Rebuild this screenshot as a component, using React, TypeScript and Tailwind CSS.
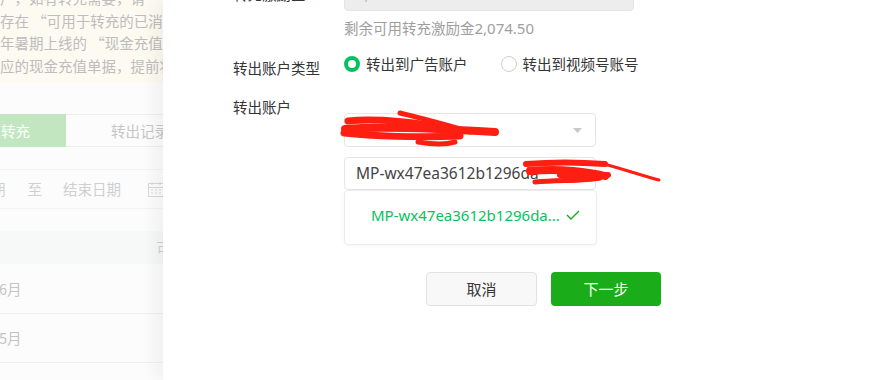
import React from "react";

const FONT = { fontFamily: '"Noto Sans", "Noto Sans CJK SC", sans-serif' };
const CJK = { fontFamily: '"Noto Sans CJK SC", "Noto Sans", sans-serif' };

function Radio({ checked, label }: { checked: boolean; label: string }) {
  return (
    <div className="flex items-center gap-[6px] h-[20px]">
      {checked ? (
        <span className="w-[16px] h-[16px] rounded-full border-[4.5px] border-[#07c160] bg-white box-border" />
      ) : (
        <span className="w-[16px] h-[16px] rounded-full border border-[#cfcfcf] bg-white box-border" />
      )}
      <span className="text-[14.5px] leading-[20px] text-[#353535]">{label}</span>
    </div>
  );
}

export default function App() {
  return (
    <div className="relative w-[896px] h-[380px] overflow-hidden flex bg-white" style={FONT}>
      {/* background page (dimmed) */}
      <div className="w-[163px] shrink-0 overflow-hidden bg-[#fcfcfc] flex flex-col" style={CJK}>
        <div className="h-[83px] bg-[#fcfaf1] overflow-hidden">
          <div className="mt-[-13px] text-[14.5px] leading-[22.5px] text-[#bdbdbd] whitespace-nowrap">
            <div>户，如有转充需要，请</div>
            <div>存在 “可用于转充的已消耗</div>
            <div>年暑期上线的 “现金充值”</div>
            <div>应的现金充值单据，提前将</div>
          </div>
        </div>
        <div className="mt-[31px] flex h-[33px] text-[14.5px]">
          <div className="w-[66px] shrink-0 bg-[#c2e7c0] text-white flex items-center pl-[1px]">转充</div>
          <div className="w-[97px] shrink-0 border-y border-[#eeeeee] flex items-center pl-[45px] text-[#c6c6c6] whitespace-nowrap overflow-hidden">转出记录</div>
        </div>
        <div className="mt-[22px] h-[40px] border-y border-[#f3f3f3] flex items-center text-[14.5px] text-[#cfcfcf] whitespace-nowrap">
          <span className="ml-[-9px]">期</span>
          <span className="ml-[22px]">至</span>
          <span className="ml-[21px]">结束日期</span>
          <svg className="ml-[27px] shrink-0" width="16" height="16" viewBox="0 0 16 16" fill="none" stroke="#d9d9d9" strokeWidth="1">
            <rect x="0.5" y="2.5" width="15" height="13" />
            <path d="M0.5 6.5h15M4 1v3M12 1v3M3 9h2M7 9h2M11 9h2M3 12h2M7 12h2M11 12h2" />
          </svg>
        </div>
        <div className="mt-[22px] h-[33px] bg-[#f7f8f8] flex items-center justify-end text-[14.5px] text-[#d0d0d0]">
          <span className="mr-[-8px]">可</span>
        </div>
        <div className="h-[50px] border-b border-[#f0f0f0] flex items-center text-[14.5px] text-[#c4c4c4]">
          <span className="ml-[-1px]">6月</span>
        </div>
        <div className="h-[49px] border-b border-[#f0f0f0] flex items-center text-[14.5px] text-[#c4c4c4]">
          <span className="ml-[-1px]">5月</span>
        </div>
      </div>

      {/* drawer */}
      <div className="relative flex-1 bg-white shadow-[-10px_0_14px_rgba(0,0,0,0.045)] text-[#353535]">
        <div className="pl-[70px] flex flex-col">
          {/* row 1 */}
          <div className="flex mt-[-22px] h-[33px]">
            <div className="w-[111px] flex items-center text-[14.5px]">转充激励金</div>
            <div className="w-[290px] h-[33px] rounded-[4px] bg-[#ededed] border border-[#e4e4e4] flex items-center pl-[11px] text-[15px] text-[#b8b8b8]">
              2,074.50
            </div>
          </div>
          <div className="ml-[111px] mt-[7px] text-[14.5px] leading-[20px] text-[#9e9e9e] whitespace-nowrap">
            剩余可用转充激励金<span className="text-[15px]">2,074.50</span>
          </div>
          {/* row radio */}
          <div className="flex mt-[16px]">
            <div className="w-[111px] mt-[4px] text-[14.5px] leading-[20px]">转出账户类型</div>
            <div className="flex gap-[33px]">
              <Radio checked label="转出到广告账户" />
              <Radio checked={false} label="转出到视频号账号" />
            </div>
          </div>
          {/* row account */}
          <div className="flex mt-[19px]">
            <div className="w-[111px] text-[14.5px] leading-[20px]">转出账户</div>
            <div className="flex flex-col">
              <div className="mt-[16px] w-[252px] h-[34px] rounded-[4px] border border-[#e6e6e6] flex items-center justify-end pr-[13px]">
                <svg width="9" height="5" viewBox="0 0 9 5">
                  <path d="M0 0h9L4.5 5z" fill="#c8c8c8" />
                </svg>
              </div>
              <div className="mt-[10px] w-[252px] h-[33px] rounded-[4px] border border-[#e6e6e6] flex items-center pl-[11px] text-[15.5px] text-[#444444] whitespace-nowrap overflow-hidden">
                MP-wx47ea3612b1296da
              </div>
              <div className="w-[253px] h-[55px] rounded-[4px] border border-[#ececec] bg-white shadow-[0_1px_4px_rgba(0,0,0,0.04)] pt-[8px]">
                <div className="h-[32px] flex items-center pl-[26px] pr-[16px] justify-between">
                  <span className="text-[15px] text-[#07c160] whitespace-nowrap">MP-wx47ea3612b1296da...</span>
                  <svg width="14" height="10" viewBox="0 0 14 10" fill="none" stroke="#1aad19" strokeWidth="1.4">
                    <path d="M1 5l4 4L13 1" />
                  </svg>
                </div>
              </div>
            </div>
          </div>
          {/* buttons */}
          <div className="flex ml-[193px] mt-[27px] gap-[14px]">
            <div className="w-[111px] h-[34px] rounded-[4px] border border-[#e2e2e2] bg-[#f8f8f8] flex items-center justify-center text-[15px] text-[#353535]">取消</div>
            <div className="w-[110px] h-[34px] rounded-[4px] bg-[#1aad19] flex items-center justify-center text-[15px] text-white">下一步</div>
          </div>
        </div>

        {/* red scribbles */}
        <svg className="absolute left-0 top-0 pointer-events-none" width="733" height="380" viewBox="163 0 733 380" fill="none" stroke="#ff1e12" strokeLinecap="round" strokeLinejoin="round">
          <path d="M345 129 C380 126, 430 128, 495 132" strokeWidth="8" />
          <path d="M348 121 C375 118, 420 122, 455 130" strokeWidth="7" />
          <path d="M400 113 C420 118, 445 124, 470 132" strokeWidth="5" />
          <path d="M344 133 C370 136, 420 138, 460 136" strokeWidth="7" />
          <path d="M418 142 C430 144, 445 145, 455 142" strokeWidth="5" />
          <path d="M526 164 C550 162, 580 162, 605 164" strokeWidth="6" />
          <path d="M530 171 C560 168, 590 172, 605 176" strokeWidth="8" />
          <path d="M535 182 C560 180, 585 181, 600 178" strokeWidth="5" />
          <path d="M600 163 C620 168, 640 175, 659 180" strokeWidth="3" />
          <path d="M560 175 C580 178, 595 178, 608 175" strokeWidth="6" />
        </svg>
      </div>
    </div>
  );
}
